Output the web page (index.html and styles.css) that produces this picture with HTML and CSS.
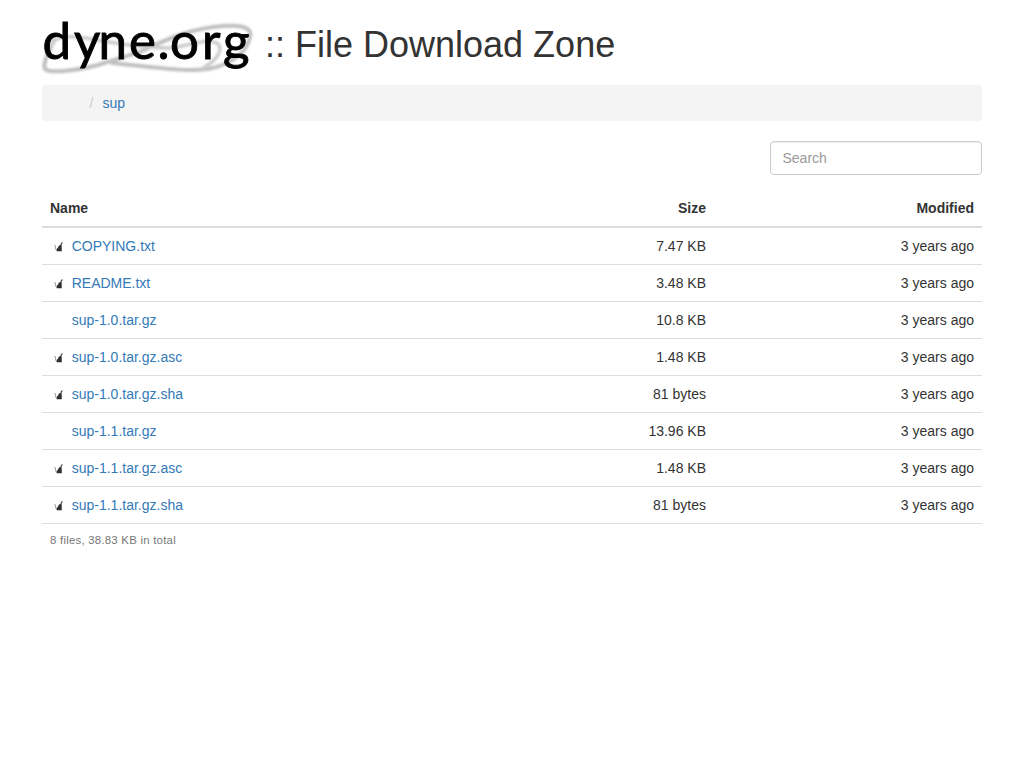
FILE: index.html
```
<!DOCTYPE html>
<html lang="en">
<head>
<meta charset="utf-8">
<title>File Download Zone</title>
<link rel="stylesheet" href="styles.css">
</head>
<body>
<svg class="defs" aria-hidden="true"><symbol id="file" viewBox="0 0 10 10"><path d="M8.8.4 7 .8 6.5 3 5 3.6 4 5.6 2.6 7.2 2.8 9.2h5L7.7 5.5 7.6 3 7.8 1.6 8.8 1.3z" fill="#303030"/><path d="M.2 2.8Q1.7 3.6 1.6 5.8T3 8.7" fill="none" stroke="#888" stroke-width=".9"/></symbol></svg>
<main class="container">
<h1 class="title">
<svg class="logo" viewBox="42 20 214 56" role="img" aria-label="dyne.org">
<g class="swirl">
<path d="M54 40C50 50 42 63 45 69C50 74 80 70 98 65L140 52C165 40 185 31 213 27C238 24 253 26 250 37C247 53 230 65 208 69C185 72 161 68 112 63"/>
<path class="faint" d="M52 45C55 34 75 36 98 40C125 45 145 48 170 48C190 46 205 38 217 43C224 48 218 60 203 68"/>
</g>
<text class="letters" y="58.5" x="42.5 74 98.5 129 157.5 170 202 223">dyne.org</text>
</svg>
<span class="heading">:: File Download Zone</span>
</h1>
<nav class="breadcrumb"><span class="slash">/</span><a href="#">sup</a></nav>
<div class="tools"><input class="search" type="text" placeholder="Search"></div>
<table class="listing">
<thead><tr><th class="name">Name</th><th class="size">Size</th><th class="modified">Modified</th></tr></thead>
<tbody>
<tr><td><div class="file"><svg class="icon"><use href="#file"/></svg><a href="#">COPYING.txt</a></div></td><td>7.47 KB</td><td>3 years ago</td></tr>
<tr><td><div class="file"><svg class="icon"><use href="#file"/></svg><a href="#">README.txt</a></div></td><td>3.48 KB</td><td>3 years ago</td></tr>
<tr><td><div class="file"><span class="icon"></span><a href="#">sup-1.0.tar.gz</a></div></td><td>10.8 KB</td><td>3 years ago</td></tr>
<tr><td><div class="file"><svg class="icon"><use href="#file"/></svg><a href="#">sup-1.0.tar.gz.asc</a></div></td><td>1.48 KB</td><td>3 years ago</td></tr>
<tr><td><div class="file"><svg class="icon"><use href="#file"/></svg><a href="#">sup-1.0.tar.gz.sha</a></div></td><td>81 bytes</td><td>3 years ago</td></tr>
<tr><td><div class="file"><span class="icon"></span><a href="#">sup-1.1.tar.gz</a></div></td><td>13.96 KB</td><td>3 years ago</td></tr>
<tr><td><div class="file"><svg class="icon"><use href="#file"/></svg><a href="#">sup-1.1.tar.gz.asc</a></div></td><td>1.48 KB</td><td>3 years ago</td></tr>
<tr><td><div class="file"><svg class="icon"><use href="#file"/></svg><a href="#">sup-1.1.tar.gz.sha</a></div></td><td>81 bytes</td><td>3 years ago</td></tr>
</tbody>
</table>
<p class="summary">8 files, 38.83 KB in total</p>
</main>
</body>
</html>
```
FILE: styles.css
```
* { box-sizing: border-box; }
body { margin: 0; background: #fff; color: #333; font: 14px/20px "Liberation Sans", Arial, sans-serif; }
a { color: #337ab7; text-decoration: none; }
.defs { display: none; }
.container { width: 940px; margin: 0 auto; padding-top: 20px; }
.title { display: flex; align-items: flex-start; gap: 9px; height: 65px; margin: 0; font-size: 36px; font-weight: 400; line-height: 40px; }
.logo { width: 214px; height: 56px; overflow: visible; }
.heading { padding-top: 5px; white-space: nowrap; }
.swirl { fill: none; stroke: #c0c0c0; stroke-width: 4; stroke-linecap: round; filter: blur(.9px); }
.faint { stroke: #ccc; stroke-width: 3.5; }
.letters { font: 51px Lato, sans-serif; fill: #000; stroke: #000; stroke-width: .9; }
.breadcrumb { display: flex; height: 36px; padding: 8px 15px 8px 47.5px; border-radius: 4px; background: #f4f4f4; }
.slash { margin-right: 9px; color: #ccc; }
.tools { display: flex; justify-content: flex-end; padding: 20px 0 15px; }
.search { width: 212px; height: 34px; padding: 6px 11.5px; border: 1px solid #ccc; border-radius: 4px; background: #fff; box-shadow: inset 0 1px 1px rgba(0, 0, 0, .075); color: #555; font: inherit; }
.search::placeholder { color: #999; }
.listing { width: 100%; border-spacing: 0; table-layout: fixed; }
.listing th, .listing td { padding: 8px; text-align: right; }
.listing th { border-bottom: 2px solid #ddd; font-weight: 700; }
.listing td { border-bottom: 1px solid #ddd; }
.listing th:first-child, .listing td:first-child { text-align: left; }
.size { width: 200px; }
.modified { width: 268px; }
.file { display: flex; align-items: center; height: 20px; }
.icon { width: 10px; height: 10px; margin: 2px 7.7px 0 4px; flex: none; }
.summary { margin: 0; padding: 8px; color: #777; font-size: 11.4px; letter-spacing: .24px; line-height: 17px; }
```
